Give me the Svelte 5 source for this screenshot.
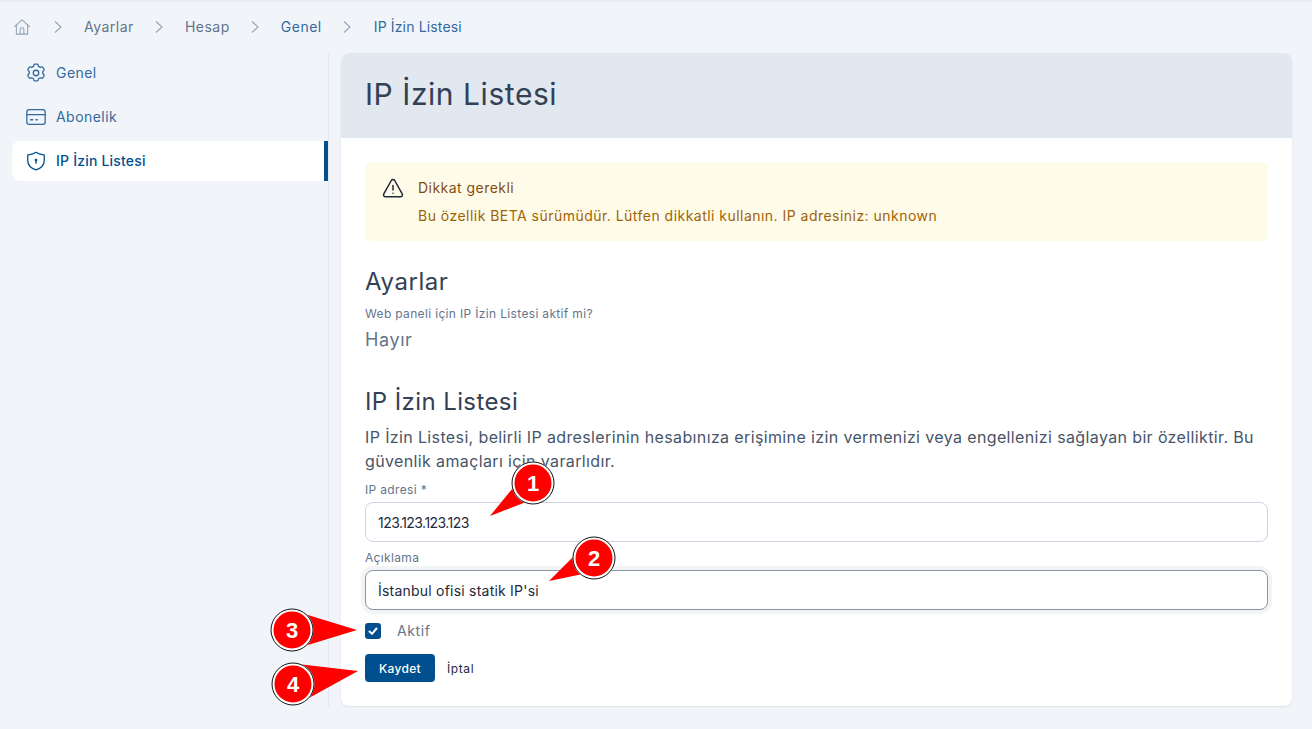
<script>
  const crumbs = [
    { label: 'Ayarlar', link: false },
    { label: 'Hesap', link: false },
    { label: 'Genel', link: true },
    { label: 'IP İzin Listesi', link: true }
  ];

  const callouts = [
    { n: 1, cx: 533, cy: 483, tip: '490,516 531,466 552,492' },
    { n: 2, cx: 594, cy: 558, tip: '549,581 590,540 612,568' },
    { n: 3, cx: 292, cy: 630, tip: '357,630 298,612 298,648' },
    { n: 4, cx: 293, cy: 684, tip: '358,671 298,664 298,704' }
  ];
</script>

<div class="page">
  <nav class="crumbs">
    <svg class="home" width="18" height="18" viewBox="0 0 24 24" fill="none" stroke="currentColor" stroke-width="1.4" stroke-linecap="round" stroke-linejoin="round">
      <path d="M2 11.5 12 2.5l10 9"/>
      <path d="M4.5 9.5V21.5h15V9.5"/>
      <path d="M9.5 21.5v-6a2.5 2.5 0 0 1 5 0v6"/>
    </svg>
    {#each crumbs as c}
      <svg class="sep" width="10" height="14" viewBox="0 0 10 14" fill="none" stroke="currentColor" stroke-width="1.1"><path d="M2 1.5 8 7l-6 5.500"/></svg>
      <span class="crumb" class:link={c.link}>{c.label}</span>
    {/each}
  </nav>

  <div class="layout">
    <aside class="side">
      <div class="item">
        <svg width="22" height="22" viewBox="0 0 24 24" fill="none" stroke="currentColor" stroke-width="1.4" stroke-linecap="round" stroke-linejoin="round">
          <path d="M9.6 3.300a1.300 1.300 0 0 1 1.200-.9h2.400c.6 0 1.100.4 1.200.9l.3 1.500c.7.300 1.300.6 1.900 1.100l1.500-.5c.5-.2 1.100 0 1.400.5l1.200 2.100c.3.500.2 1.100-.2 1.500l-1.200 1c.1.700.1 1.400 0 2.100l1.200 1c.4.400.5 1 .2 1.500l-1.200 2.100c-.3.500-.9.700-1.400.5l-1.500-.5c-.6.500-1.200.8-1.900 1.100l-.3 1.500c-.1.500-.6.900-1.200.9h-2.400c-.6 0-1.100-.4-1.200-.9l-.3-1.500c-.7-.3-1.300-.6-1.900-1.100l-1.500.5c-.5.200-1.100 0-1.400-.5l-1.200-2.100c-.3-.5-.2-1.100.2-1.500l1.200-1c-.1-.7-.1-1.400 0-2.100l-1.200-1c-.4-.4-.5-1-.2-1.500l1.200-2.100c.3-.5.9-.7 1.400-.5l1.500.5c.6-.5 1.200-.8 1.900-1.100z"/>
          <circle cx="12" cy="12" r="3"/>
        </svg>
        <span>Genel</span>
      </div>
      <div class="item">
        <svg width="22" height="22" viewBox="0 0 24 24" fill="none" stroke="currentColor" stroke-width="1.4" stroke-linecap="round" stroke-linejoin="round">
          <rect x="2" y="4" width="20" height="16" rx="2.500"/>
          <path d="M2 9.500h20"/>
          <path d="M6 15h2.500M12 15h1.500"/>
        </svg>
        <span>Abonelik</span>
      </div>
      <div class="item active">
        <svg width="22" height="22" viewBox="0 0 24 24" fill="none" stroke="currentColor" stroke-width="1.4" stroke-linecap="round" stroke-linejoin="round">
          <path d="M12 2.500c2.500 1.800 5.500 2.700 9 2.700v6.300c0 4.800-3.500 8.500-9 10.300-5.500-1.800-9-5.500-9-10.300V5.200c3.500 0 6.500-.9 9-2.700z"/>
          <circle cx="12" cy="11" r="0.800" fill="currentColor"/>
          <path d="M12 12v2.500"/>
        </svg>
        <span>IP İzin Listesi</span>
      </div>
    </aside>

    <main class="card">
      <header class="card-head">
        <h1>IP İzin Listesi</h1>
      </header>
      <div class="card-body">
        <div class="alert">
          <svg width="24" height="24" viewBox="0 0 24 24" fill="none" stroke="#1f2937" stroke-width="1.5" stroke-linecap="round" stroke-linejoin="round">
            <path d="M10.300 4.500 2.800 17.800A2 2 0 0 0 4.500 20.800h15a2 2 0 0 0 1.700-3L13.700 4.500a2 2 0 0 0-3.400 0z"/>
            <path d="M12 9.500v4.500M12 17.200v.1"/>
          </svg>
          <div>
            <div class="alert-title">Dikkat gerekli</div>
            <div class="alert-text">Bu özellik BETA sürümüdür. Lütfen dikkatli kullanın. IP adresiniz: unknown</div>
          </div>
        </div>

        <h2 class="first">Ayarlar</h2>
        <div class="label">Web paneli için IP İzin Listesi aktif mi?</div>
        <div class="value">Hayır</div>

        <h2 class="second">IP İzin Listesi</h2>
        <p class="desc">IP İzin Listesi, belirli IP adreslerinin hesabınıza erişimine izin vermenizi veya engellenizi sağlayan bir özelliktir. Bu güvenlik amaçları için yararlıdır.</p>

        <div class="field">
          <span class="label">IP adresi *</span>
          <div class="input num">123.123.123.123</div>
        </div>
        <div class="field">
          <span class="label">Açıklama</span>
          <div class="input focus">İstanbul ofisi statik IP'si</div>
        </div>

        <div class="check">
          <span class="box">
            <svg width="12" height="12" viewBox="0 0 12 12" fill="none" stroke="#fff" stroke-width="2" stroke-linecap="round" stroke-linejoin="round"><path d="M2.500 6.500 5 8.800 9.500 3.500"/></svg>
          </span>
          <span>Aktif</span>
        </div>

        <div class="actions">
          <button class="save">Kaydet</button>
          <button class="cancel">İptal</button>
        </div>
      </div>
    </main>
  </div>

  <!-- numbered callouts drawn over the screenshot -->
  <svg class="callouts" width="1312" height="729" viewBox="0 0 1312 729">
    {#each callouts as c}
      <polygon points={c.tip} fill="#fe0000"/>
      <circle cx={c.cx} cy={c.cy} r="20" fill="#fe0000" stroke="#fff" stroke-width="3"/>
      <circle cx={c.cx} cy={c.cy} r="21" fill="none" stroke="#111" stroke-width="1"/>
      <text x={c.cx} y={c.cy + 8} text-anchor="middle">{c.n}</text>
    {/each}
  </svg>
</div>

<style>
  :global(body) {
    margin: 0;
    background: #f1f5f9;
  }
  .page {
    position: relative;
    height: 729px;
    box-sizing: border-box;
    border-top: 2px solid #e9edf2;
    background: #f1f5f9;
    font-family: Inter, "Open Sans", sans-serif;
    color: #334155;
    overflow: hidden;
  }
  .crumbs {
    display: flex;
    align-items: center;
    height: 51px;
    box-sizing: border-box;
    padding: 0 0 2px 13px;
    font-size: 14px;
    letter-spacing: 0.5px;
    color: #64748b;
  }
  .home { color: #94a3b8; margin-right: 22px; }
  .sep { color: #94a3b8; margin-right: 21px; }
  .crumb { margin-right: 20px; }
  .crumb.link { color: #33699f; }
  .crumb:last-child { letter-spacing: 0.15px; margin-left: 1px; }

  .layout {
    display: flex;
    align-items: flex-start;
  }
  .side {
    width: 316px;
    height: 654px;
    margin-left: 12px;
    border-right: 1px solid #e2e8f0;
  }
  .item {
    display: flex;
    align-items: center;
    gap: 9px;
    height: 40px;
    margin-bottom: 4px;
    padding-left: 13px;
    padding-bottom: 1px;
    box-sizing: border-box;
    font-size: 14px;
    letter-spacing: 0.45px;
    color: #33699f;
    border-radius: 8px 0 0 8px;
  }
  .item.active {
    background: #fff;
    color: #00508f;
    font-weight: 500;
    letter-spacing: 0.2px;
    border-right: 4px solid #00508f;
  }
  .card {
    width: 951px;
    margin-left: 12px;
    background: #fff;
    border-radius: 8px;
    box-shadow: 0 1px 2px rgba(0, 0, 0, 0.08);
    overflow: hidden;
  }
  .card-head {
    height: 85px;
    box-sizing: border-box;
    display: flex;
    align-items: center;
    padding: 0 24px 3px;
    background: #e2e8f0;
  }
  h1 {
    margin: 0;
    font-size: 30px;
    font-weight: 400;
    letter-spacing: 0.55px;
    color: #334155;
  }
  .card-body {
    padding: 24px;
    height: 520px;
  }
  .alert {
    display: flex;
    gap: 13px;
    height: 79px;
    box-sizing: border-box;
    padding: 14px 16px;
    background: #fefce8;
    border-radius: 6px;
    font-size: 14px;
    letter-spacing: 0.47px;
  }
  .alert-title { color: #854d0e; line-height: 24px; }
  .alert-text { color: #a16207; line-height: 24px; margin-top: 4px; }
  h2 {
    margin: 0;
    font-size: 24px;
    font-weight: 400;
    line-height: 32px;
    letter-spacing: 0.4px;
    color: #334155;
  }
  h2.first { margin-top: 25px; letter-spacing: 0.55px; }
  h2.second { margin-top: 32px; }
  .label {
    display: block;
    font-size: 12px;
    line-height: 16px;
    letter-spacing: 0.34px;
    color: #64748b;
  }
  h2.first + .label { margin-top: 8px; }
  .value {
    margin-top: 4px;
    font-size: 18px;
    line-height: 28px;
    letter-spacing: 0.6px;
    color: #64748b;
  }
  .desc {
    margin: 7px 0 0;
    font-size: 16px;
    line-height: 24px;
    letter-spacing: 0.37px;
    color: #475569;
  }
  .field { margin-top: 9px; }
  .field + .field { margin-top: 8px; }
  .input {
    display: flex;
    align-items: center;
    height: 40px;
    box-sizing: border-box;
    margin-top: 4px;
    padding: 0 12px;
    border: 1px solid #cbd5e1;
    border-radius: 8px;
    font-size: 14px;
    letter-spacing: 0.22px;
    color: #1e293b;
    background: #fff;
  }
  .input.num { letter-spacing: -0.55px; }
  .input.focus {
    border-color: #8a94a6;
    box-shadow: 0 0 0 4px #f3f4f6;
  }
  .check {
    display: flex;
    align-items: center;
    gap: 16px;
    margin-top: 12px;
    font-size: 14px;
    letter-spacing: 0.6px;
    color: #64748b;
  }
  .box {
    display: flex;
    align-items: center;
    justify-content: center;
    width: 16px;
    height: 16px;
    border-radius: 3px;
    background: #00508f;
  }
  .actions {
    display: flex;
    align-items: center;
    gap: 12px;
    margin-top: 15px;
  }
  button {
    border: 0;
    font-family: inherit;
    font-size: 12px;
    letter-spacing: 0.3px;
    cursor: pointer;
  }
  .save {
    width: 70px;
    height: 28px;
    border-radius: 4px;
    background: #00508f;
    color: #fff;
    font-weight: 500;
  }
  .cancel {
    background: none;
    padding: 0;
    letter-spacing: 0.6px;
    color: #1e293b;
  }
  .callouts {
    position: absolute;
    left: 0;
    top: -2px;
    pointer-events: none;
  }
  .callouts text {
    font-family: "Liberation Sans", sans-serif;
    font-weight: 700;
    font-size: 22px;
    fill: #fff;
  }
</style>
